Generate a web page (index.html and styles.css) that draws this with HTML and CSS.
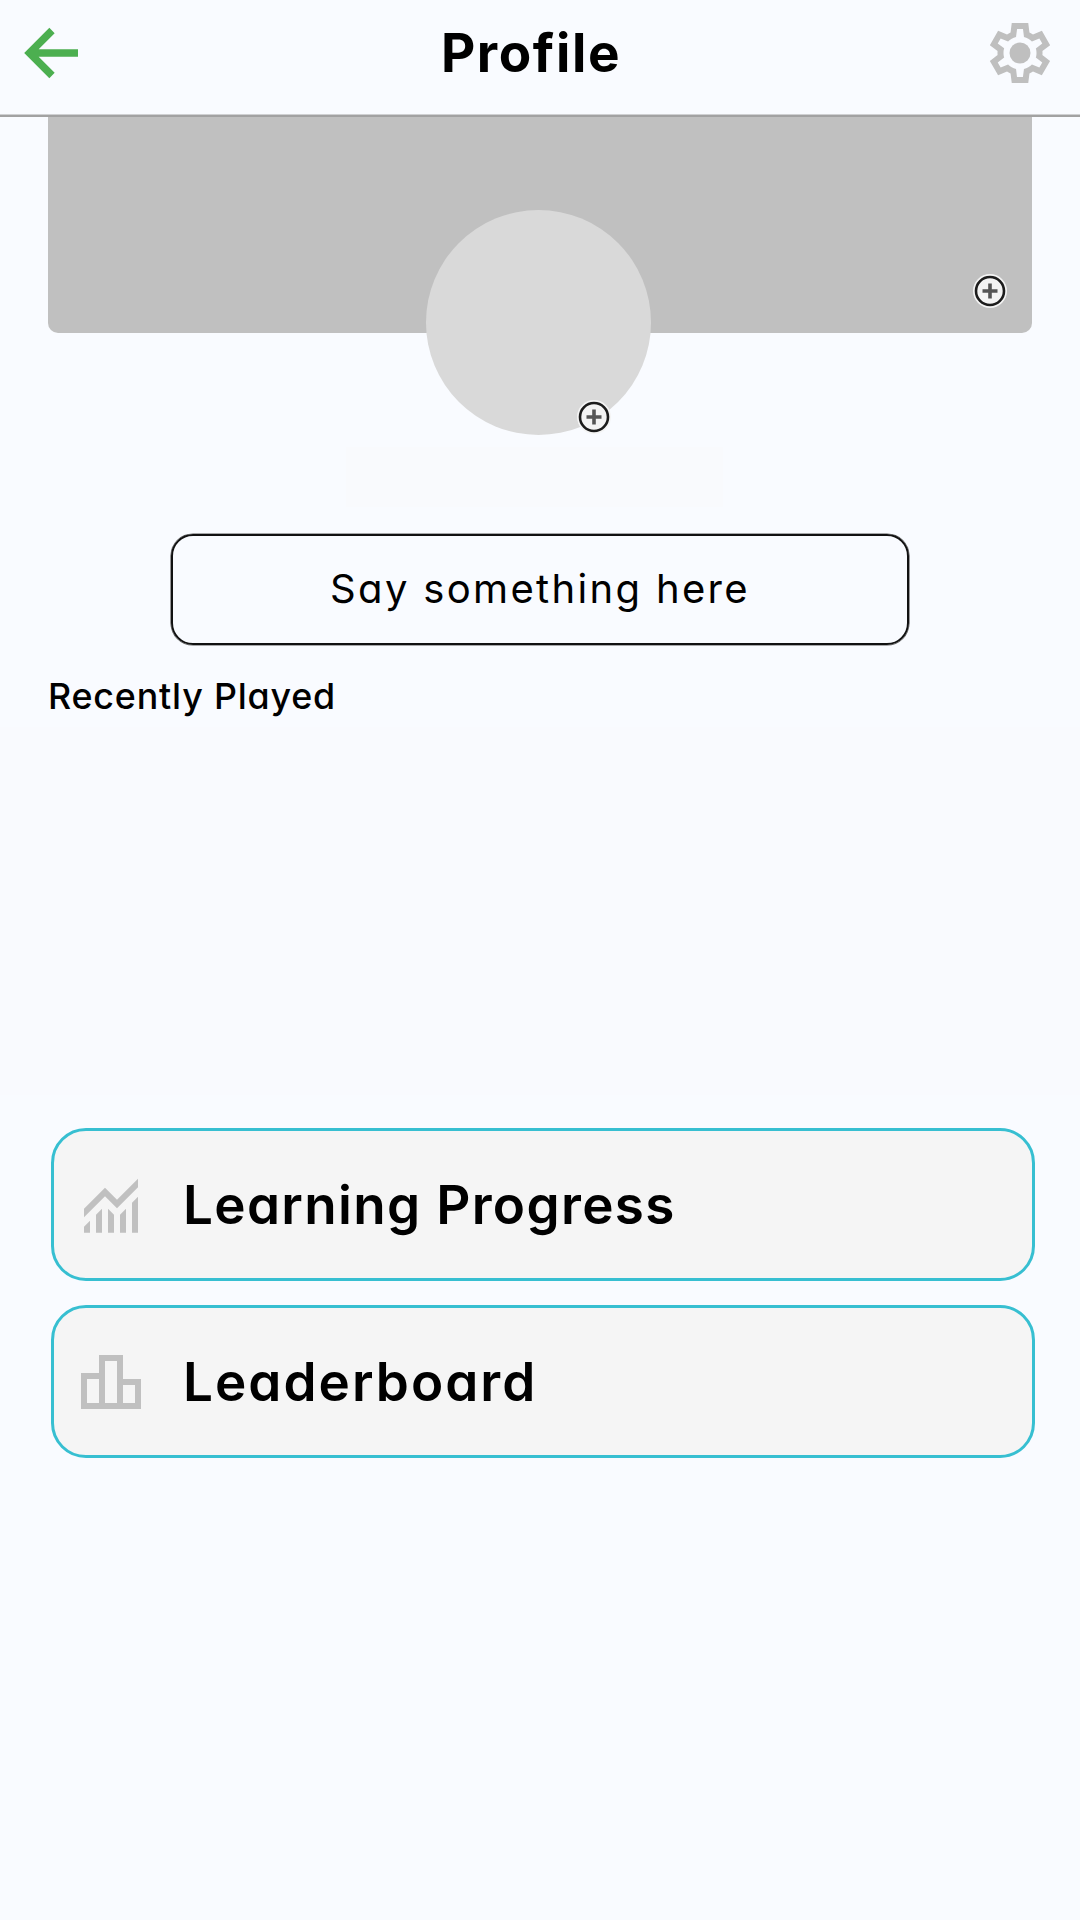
FILE: index.html
```
<!DOCTYPE html>
<html lang="en">
<head>
<meta charset="utf-8">
<title>Profile</title>
<link rel="stylesheet" href="styles.css">
</head>
<body>
<header class="topbar">
  <svg class="back" viewBox="0 0 60 60" aria-label="Back"><path d="M34 7.500 11.500 30 34 52.500M12 30h48" fill="none" stroke="#4caf50" stroke-width="7.500"/></svg>
  <h1 class="title">Profile</h1>
  <svg class="settings" viewBox="0 -960 960 960" aria-label="Settings"><path d="m370-80-16-128q-13-5-24.500-12T307-235l-119 50L78-375l103-78q-1-7-1-13.500v-27q0-6.500 1-13.500L78-585l110-190 119 50q11-8 23-15t24-12l16-128h220l16 128q13 5 24.500 12t22.500 15l119-50 110 190-103 78q1 7 1 13.500v27q0 6.500-2 13.500l103 78-110 190-118-50q-11 8-23 15t-24 12L590-80H370Zm70-80h79l14-106q31-8 57.500-23.500T639-327l99 41 39-68-86-65q5-14 7-29.500t2-31.500q0-16-2-31.500t-7-29.500l86-65-39-68-99 42q-22-23-48.500-38.500T533-694l-13-106h-79l-14 106q-31 8-57.500 23.500T321-633l-99-41-39 68 86 64q-5 15-7 30t-2 32q0 16 2 31t7 30l-86 65 39 68 99-42q22 23 48.500 38.500T427-266l13 106Z"/><circle cx="480" cy="-480" r="140"/></svg>
</header>
<main class="profile">
  <section class="cover">
    <svg class="add add-cover" viewBox="0 0 36 36" aria-label="Change cover"><use href="#plus"/></svg>
    <div class="avatar">
      <svg class="add add-avatar" viewBox="0 0 36 36" aria-label="Change photo"><g id="plus"><circle cx="18" cy="18" r="17" fill="#f4f4f4"/><circle cx="18" cy="18" r="14" fill="none" stroke="#1c1c1c" stroke-width="2.600"/><path d="M18 10.500v15M10.500 18h15" stroke="#555" stroke-width="3.600"/></g></svg>
    </div>
  </section>
  <div class="name"></div>
  <div class="status">Say something here</div>
  <section class="recent">
    <h2 class="recent-title">Recently Played</h2>
    <div class="recent-list"></div>
  </section>
  <nav class="links">
    <a class="link">
      <svg class="link-icon" viewBox="0 -970 960 960"><path d="M120-120v-80l80-80v160h-80Zm160 0v-240l80-80v320h-80Zm160 0v-320l80 81v239h-80Zm160 0v-239l80-80v319h-80Zm160 0v-400l80-80v480h-80ZM120-327v-113l280-280 160 160 280-280v113L560-447 400-607 120-327Z"/></svg>
      <span class="link-text learning">Learning Progress</span>
    </a>
    <a class="link">
      <svg class="link-icon" viewBox="0 0 24 24"><path d="M16 11V3H8v6H2v12h20V11h-6zm-6-6h4v14h-4V5zm-6 6h4v8H4v-8zm16 8h-4v-6h4v6z"/></svg>
      <span class="link-text leaders">Leaderboard</span>
    </a>
  </nav>
</main>
</body>
</html>
```

FILE: styles.css
```
* { box-sizing: border-box; }
body {
  margin: 0;
  min-height: 1920px;
  background: #f9fbff;
  color: #000;
  font-family: Inter, "Liberation Sans", sans-serif;
  font-feature-settings: "cv11";
}
svg { display: block; flex: none; }
h1, h2 { margin: 0; }

.topbar {
  height: 117px;
  padding: 0 24px 10px 18px;
  border-bottom: 2px solid #a2a2a2;
  box-shadow: inset 0 -1px #cfd0d2;
  display: flex;
  align-items: center;
  justify-content: space-between;
}
.back { width: 60px; height: 60px; }
.title {
  font-size: 53px;
  line-height: 64px;
  font-weight: 700;
  letter-spacing: 1.6px;
}
.settings { width: 72px; height: 72px; fill: #bfbfbf; }

.cover {
  position: relative;
  height: 216px;
  margin: 0 48px;
  border-radius: 0 0 10px 10px;
  background: #c0c0c0;
}
.avatar {
  position: absolute;
  left: 378px;
  top: 93px;
  width: 225px;
  height: 225px;
  border-radius: 50%;
  background: #d9d9d9;
}
.add { position: absolute; width: 36px; height: 36px; }
.add-cover { right: 24px; bottom: 24px; }
.add-avatar { left: 150px; top: 189px; }

.name {
  width: 377px;
  height: 60px;
  margin: 114px 0 0 346px;
  background: #f9fafd;
}
.status {
  width: 738px;
  height: 111px;
  margin: 27px 0 0 171px;
  padding-bottom: 2px;
  border: 2px solid #111;
  border-radius: 22px;
  box-shadow: 0 0 0 .6px #555;
  display: flex;
  align-items: center;
  justify-content: center;
  font-size: 40px;
  letter-spacing: 2.33px;
}

.recent { height: 483px; padding-top: 29px; }
.recent-title {
  padding-left: 48px;
  font-size: 35.8px;
  line-height: 44px;
  font-weight: 500;
  letter-spacing: .82px;
}
.recent-list { height: 368px; margin-top: 9px; background: #f9fafe; }

.links {
  display: flex;
  flex-direction: column;
  gap: 24px;
  padding: 0 45px 0 51px;
}
.link {
  height: 153px;
  padding-left: 21px;
  border: 3px solid #37bfd1;
  border-radius: 35px;
  background: #f5f5f5;
  display: flex;
  align-items: center;
  gap: 36px;
}
.link-icon { width: 72px; height: 72px; fill: #c0c0c0; }
.link-text { font-size: 53px; line-height: 64px; font-weight: 600; }
.learning { letter-spacing: 1.33px; }
.leaders { letter-spacing: 2.03px; }
```
